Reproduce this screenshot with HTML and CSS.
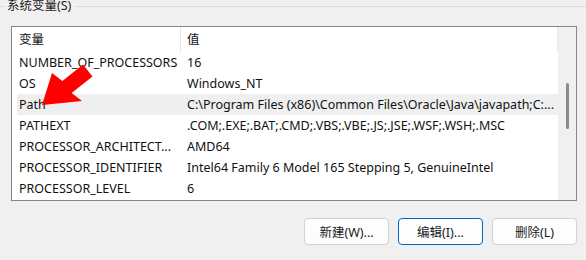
FILE: index.html
```html
<!DOCTYPE html>
<html>
<head>
<meta charset="utf-8">
<link rel="stylesheet" href="styles.css">
</head>
<body>
<div class="group">
  <div class="group-title"><span class="dash"></span><span class="label">系统变量(S)</span><span class="line"></span></div>
  <div class="listbox">
    <div class="list">
      <div class="header">
        <div class="c1">变量</div>
        <div class="c2">值</div>
      </div>
      <div class="row"><div class="c1">NUMBER_OF_PROCESSORS</div><div class="c2">16</div></div>
      <div class="row"><div class="c1">OS</div><div class="c2">Windows_NT</div></div>
      <div class="row sel"><div class="c1">Path</div><div class="c2">C:\Program Files (x86)\Common Files\Oracle\Java\javapath;C:...</div></div>
      <div class="row"><div class="c1">PATHEXT</div><div class="c2">.COM;.EXE;.BAT;.CMD;.VBS;.VBE;.JS;.JSE;.WSF;.WSH;.MSC</div></div>
      <div class="row"><div class="c1">PROCESSOR_ARCHITECT...</div><div class="c2">AMD64</div></div>
      <div class="row"><div class="c1">PROCESSOR_IDENTIFIER</div><div class="c2">Intel64 Family 6 Model 165 Stepping 5, GenuineIntel</div></div>
      <div class="row"><div class="c1">PROCESSOR_LEVEL</div><div class="c2">6</div></div>
    </div>
    <div class="scrollbar"><div class="thumb"></div></div>
  </div>
  <div class="buttons">
    <button class="btn">新建(W)...</button>
    <button class="btn focus">编辑(I)...</button>
    <button class="btn">删除(L)</button>
  </div>
</div>
<svg class="arrow" width="586" height="260" viewBox="0 0 586 260">
  <polygon points="83,64.5 92.5,76.5 71.6,92.9 82,101 42,105 52,73 62.4,81.1" fill="#fe0000"/>
</svg>
</body>
</html>
```
FILE: styles.css
```css
html, body {
  margin: 0;
  padding: 0;
}
body {
  width: 586px;
  height: 260px;
  overflow: hidden;
  background: #f0f0f0;
  font-family: "Noto Sans", "Noto Sans CJK SC", sans-serif;
  font-size: 12.5px;
  color: #111;
  position: relative;
}
.group-title {
  display: flex;
  align-items: center;
  height: 12px;
  margin-top: 0;
}
.group-title .dash {
  width: 5px;
  height: 1px;
  background: #dcdcdc;
}
.group-title .label {
  padding: 0 3px 0 2px;
  line-height: 12px;
  position: relative;
  top: 0;
  color: #1a1a1a;
}
.group-title .line {
  flex: 1;
  height: 1px;
  background: #dcdcdc;
}
.listbox {
  margin: 14px 0 0 11px;
  width: 564px;
  height: 173px;
  border: 1px solid #868686;
  background: #fff;
  display: flex;
}
.list {
  width: 546px;
  overflow: hidden;
}
.header {
  display: flex;
  height: 25px;
  align-items: center;
}
.header .c1 {
  width: 161px;
  padding-left: 7px;
  height: 25px;
  line-height: 25px;
  border-right: 1px solid #e5e5e5;
}
.header .c2 {
  flex: 1;
  padding-left: 6px;
  height: 25px;
  line-height: 25px;
  border-right: 1px solid #ececec;
}
.row {
  display: flex;
  height: 21px;
  line-height: 21px;
  margin-left: 5px;
  white-space: nowrap;
}
.row.sel {
  background: #efefef;
}
.row .c1 {
  width: 161px;
  padding-left: 2px;
  overflow: hidden;
}
.row .c2 {
  flex: 1;
  padding-left: 7px;
  overflow: hidden;
}
.scrollbar {
  width: 18px;
  background: #f0f0f0;
  position: relative;
}
.thumb {
  position: absolute;
  left: 8px;
  top: 56px;
  width: 3px;
  height: 46px;
  border-radius: 2px;
  background: #8a8a8a;
}
.buttons {
  display: flex;
  justify-content: flex-end;
  gap: 9px;
  margin-top: 17px;
  padding-right: 9px;
}
.btn {
  width: 85px;
  height: 27px;
  border: 1px solid #d2d2d2;
  border-radius: 4px;
  background: #fdfdfd;
  font-family: "Noto Sans", "Noto Sans CJK SC", sans-serif;
  font-size: 12.5px;
  color: #1a1a1a;
  padding: 0;
}
.btn.focus {
  border-color: #0067c0;
}
.arrow {
  position: absolute;
  left: 0;
  top: 0;
  pointer-events: none;
}
```
